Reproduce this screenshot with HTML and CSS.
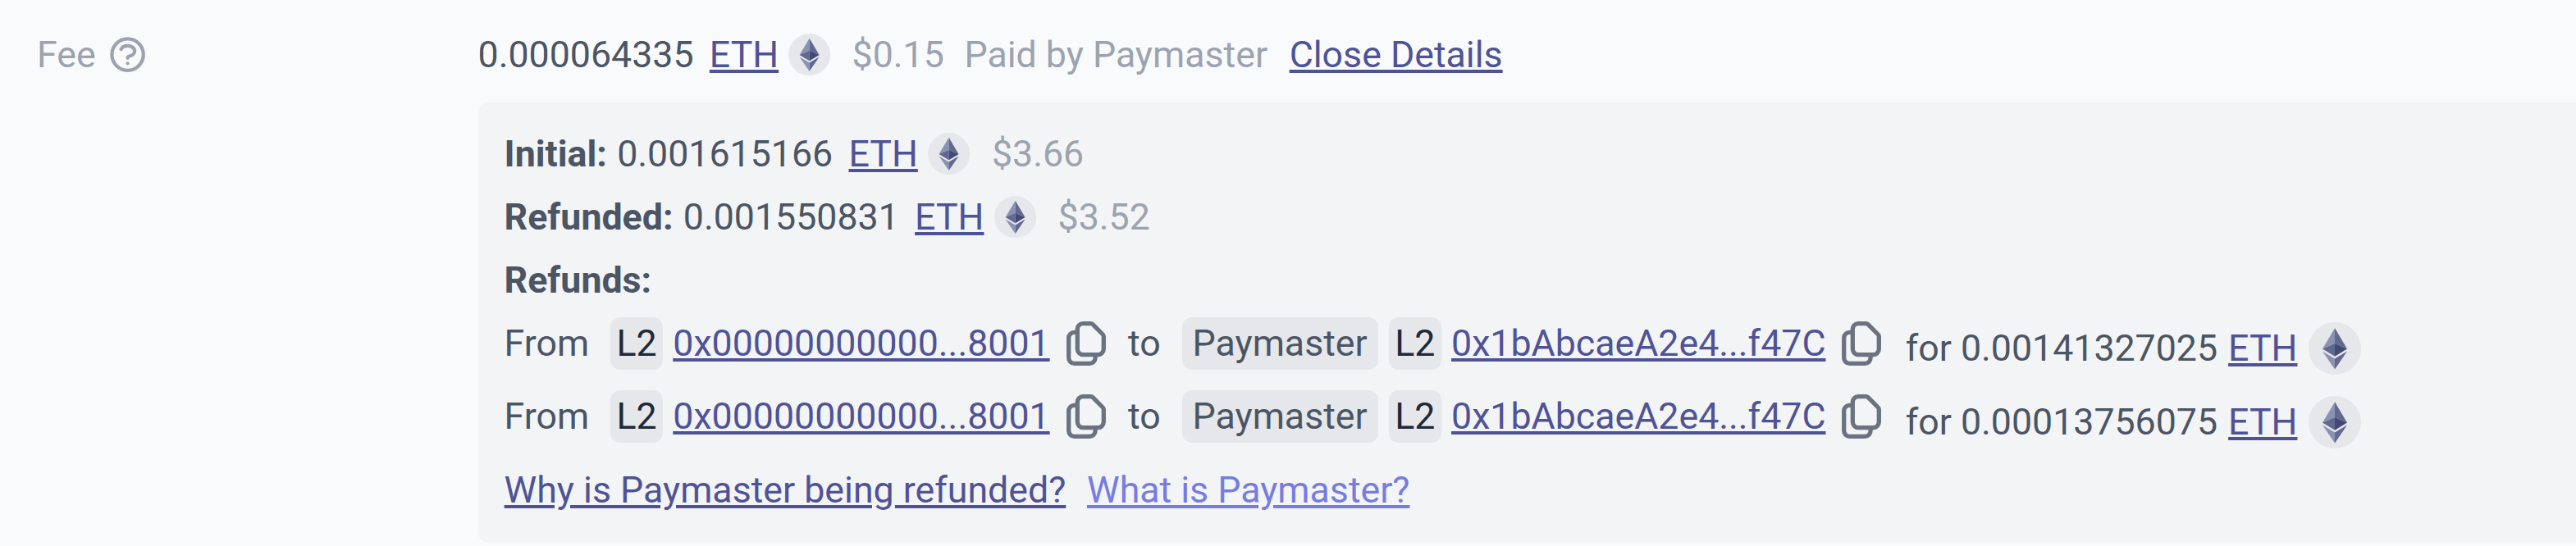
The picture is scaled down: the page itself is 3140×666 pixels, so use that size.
FILE: index.html
```html
<!DOCTYPE html>
<html lang="en">
<head>
<meta charset="utf-8">
<title>Transaction fee</title>
<link rel="stylesheet" href="styles.css">
</head>
<body>
<svg class="defs" aria-hidden="true">
  <symbol id="eth" viewBox="0 0 64 64">
    <circle cx="32" cy="32" r="32" fill="#e5e7eb"/>
    <path d="M32 7.3 17 32.6 32 26z" fill="#8a92b2"/>
    <path d="M32 7.3 47 32.6 32 26z" fill="#62688f"/>
    <path d="M17 32.6 32 26v15.7z" fill="#62688f"/>
    <path d="M47 32.6 32 26v15.7z" fill="#454a75"/>
    <path d="M17 35.5 32 44.5v13.1z" fill="#8a92b2"/>
    <path d="M47 35.5 32 44.5v13.1z" fill="#62688f"/>
  </symbol>
  <symbol id="copy" viewBox="0 0 48 54">
    <path d="M13.300 13.300H9.500a6.800 6.800 0 0 0-6.800 6.800V44.500A6.800 6.800 0 0 0 9.500 51.300H28.300A6.800 6.800 0 0 0 35.100 44.500V40.500M20.100 2.700H29.500Q31 2.700 32 3.700L44.300 16Q45.300 17 45.300 18.500V33.800a6.800 6.800 0 0 1-6.800 6.800H20.100A6.800 6.800 0 0 1 13.300 33.800V9.500A6.800 6.800 0 0 1 20.100 2.700z" fill="none" stroke="#6b7280" stroke-width="5.300" stroke-linejoin="round"/>
  </symbol>
</svg>
<div class="fee">
  <div class="label">
    <span>Fee</span>
    <svg class="help" viewBox="0 0 24 24"><path d="M8.228 9c.549-1.165 2.03-2 3.772-2 2.21 0 4 1.343 4 3 0 1.400-1.278 2.575-3.006 2.907-.542.104-.994.540-.994 1.093m0 3h.01M21 12a9 9 0 11-18 0 9 9 0 0118 0z"/></svg>
  </div>
  <div class="value">
    <div class="line summary">
      <span>0.000064335</span>
      <a class="link token">ETH</a>
      <svg class="eth"><use href="#eth"/></svg>
      <span class="muted usd">$0.15</span>
      <span class="muted payer">Paid by Paymaster</span>
      <a class="link toggle">Close Details</a>
    </div>
    <div class="details">
      <div class="line"><b>Initial:</b><span class="amount">0.001615166</span><a class="link token">ETH</a><svg class="eth"><use href="#eth"/></svg><span class="muted usd">$3.66</span></div>
      <div class="line"><b>Refunded:</b><span class="amount">0.001550831</span><a class="link token">ETH</a><svg class="eth"><use href="#eth"/></svg><span class="muted usd">$3.52</span></div>
      <div class="line"><b>Refunds:</b></div>
      <div class="refund">
        <span class="from">From</span><span class="badge">L2</span><a class="link address">0x00000000000...8001</a><svg class="copy"><use href="#copy"/></svg>
        <span class="to">to</span><span class="tag">Paymaster</span><span class="badge next">L2</span><a class="link address">0x1bAbcaeA2e4...f47C</a><svg class="copy"><use href="#copy"/></svg>
        <div class="sum"><span>for 0.00141327025</span><a class="link">ETH</a><svg class="eth large"><use href="#eth"/></svg></div>
      </div>
      <div class="refund">
        <span class="from">From</span><span class="badge">L2</span><a class="link address">0x00000000000...8001</a><svg class="copy"><use href="#copy"/></svg>
        <span class="to">to</span><span class="tag">Paymaster</span><span class="badge next">L2</span><a class="link address">0x1bAbcaeA2e4...f47C</a><svg class="copy"><use href="#copy"/></svg>
        <div class="sum"><span>for 0.00013756075</span><a class="link">ETH</a><svg class="eth large"><use href="#eth"/></svg></div>
      </div>
      <div class="line faq"><a class="link">Why is Paymaster being refunded?</a><a class="link light">What is Paymaster?</a></div>
    </div>
  </div>
</div>
</body>
</html>
```
FILE: styles.css
```css
* { box-sizing: border-box; }
body {
  margin: 0;
  height: 666px;
  overflow: hidden;
  background: #f9fafc;
  color: #4b5563;
  font-family: Roboto, sans-serif;
  font-size: 44.7px;
  line-height: 64px;
  white-space: nowrap;
}
.defs { position: absolute; width: 0; height: 0; }
svg { display: block; flex: none; }
.fee { display: grid; grid-template-columns: 582.6px 1fr; padding-top: 28px; }
.label { display: flex; align-items: center; height: 77px; padding-left: 45px; color: #9ca3af; }
.help {
  width: 51.2px;
  height: 51.2px;
  margin-left: 13.8px;
  fill: none;
  stroke: currentColor;
  stroke-width: 2;
  stroke-linecap: round;
  stroke-linejoin: round;
}
.line { display: flex; align-items: center; height: 77px; }
.summary { margin-bottom: 20px; }
.link { color: #4f5396; text-decoration: underline; }
.light { margin-left: 25.7px; color: #777ce0; }
.muted { color: #9ca3af; }
.amount { margin-left: 12.4px; }
.token { margin-left: 19.3px; }
.eth { width: 51.2px; height: 51.2px; margin-left: 12.2px; }
.summary .eth { margin-left: 11.5px; }
.sum .eth { width: 64px; height: 64px; margin-left: 13.3px; }
.usd { margin-left: 26.7px; }
.payer { margin-left: 24.6px; }
.toggle { margin-left: 26.6px; }
.details { height: 537px; padding: 24px 32px; border-radius: 12px 0 0 12px; background: #f3f4f6; }
.refund { display: flex; align-items: center; height: 77px; margin-bottom: 12.5px; }
.badge, .tag { height: 64px; border-radius: 12px; background: #e5e7eb; }
.badge { margin-left: 26px; padding: 0 7.3px; color: #1f2937; }
.badge.next { margin-left: 13.1px; }
.tag { margin-left: 25.8px; padding: 0 13.1px; }
.address { margin-left: 12.4px; }
.copy { width: 48px; height: 54px; margin-left: 19.9px; }
.to { margin-left: 27.5px; }
.sum { display: flex; align-items: center; margin: 13px 0 0 29.3px; }
.sum .link { margin-left: 13px; }
```
